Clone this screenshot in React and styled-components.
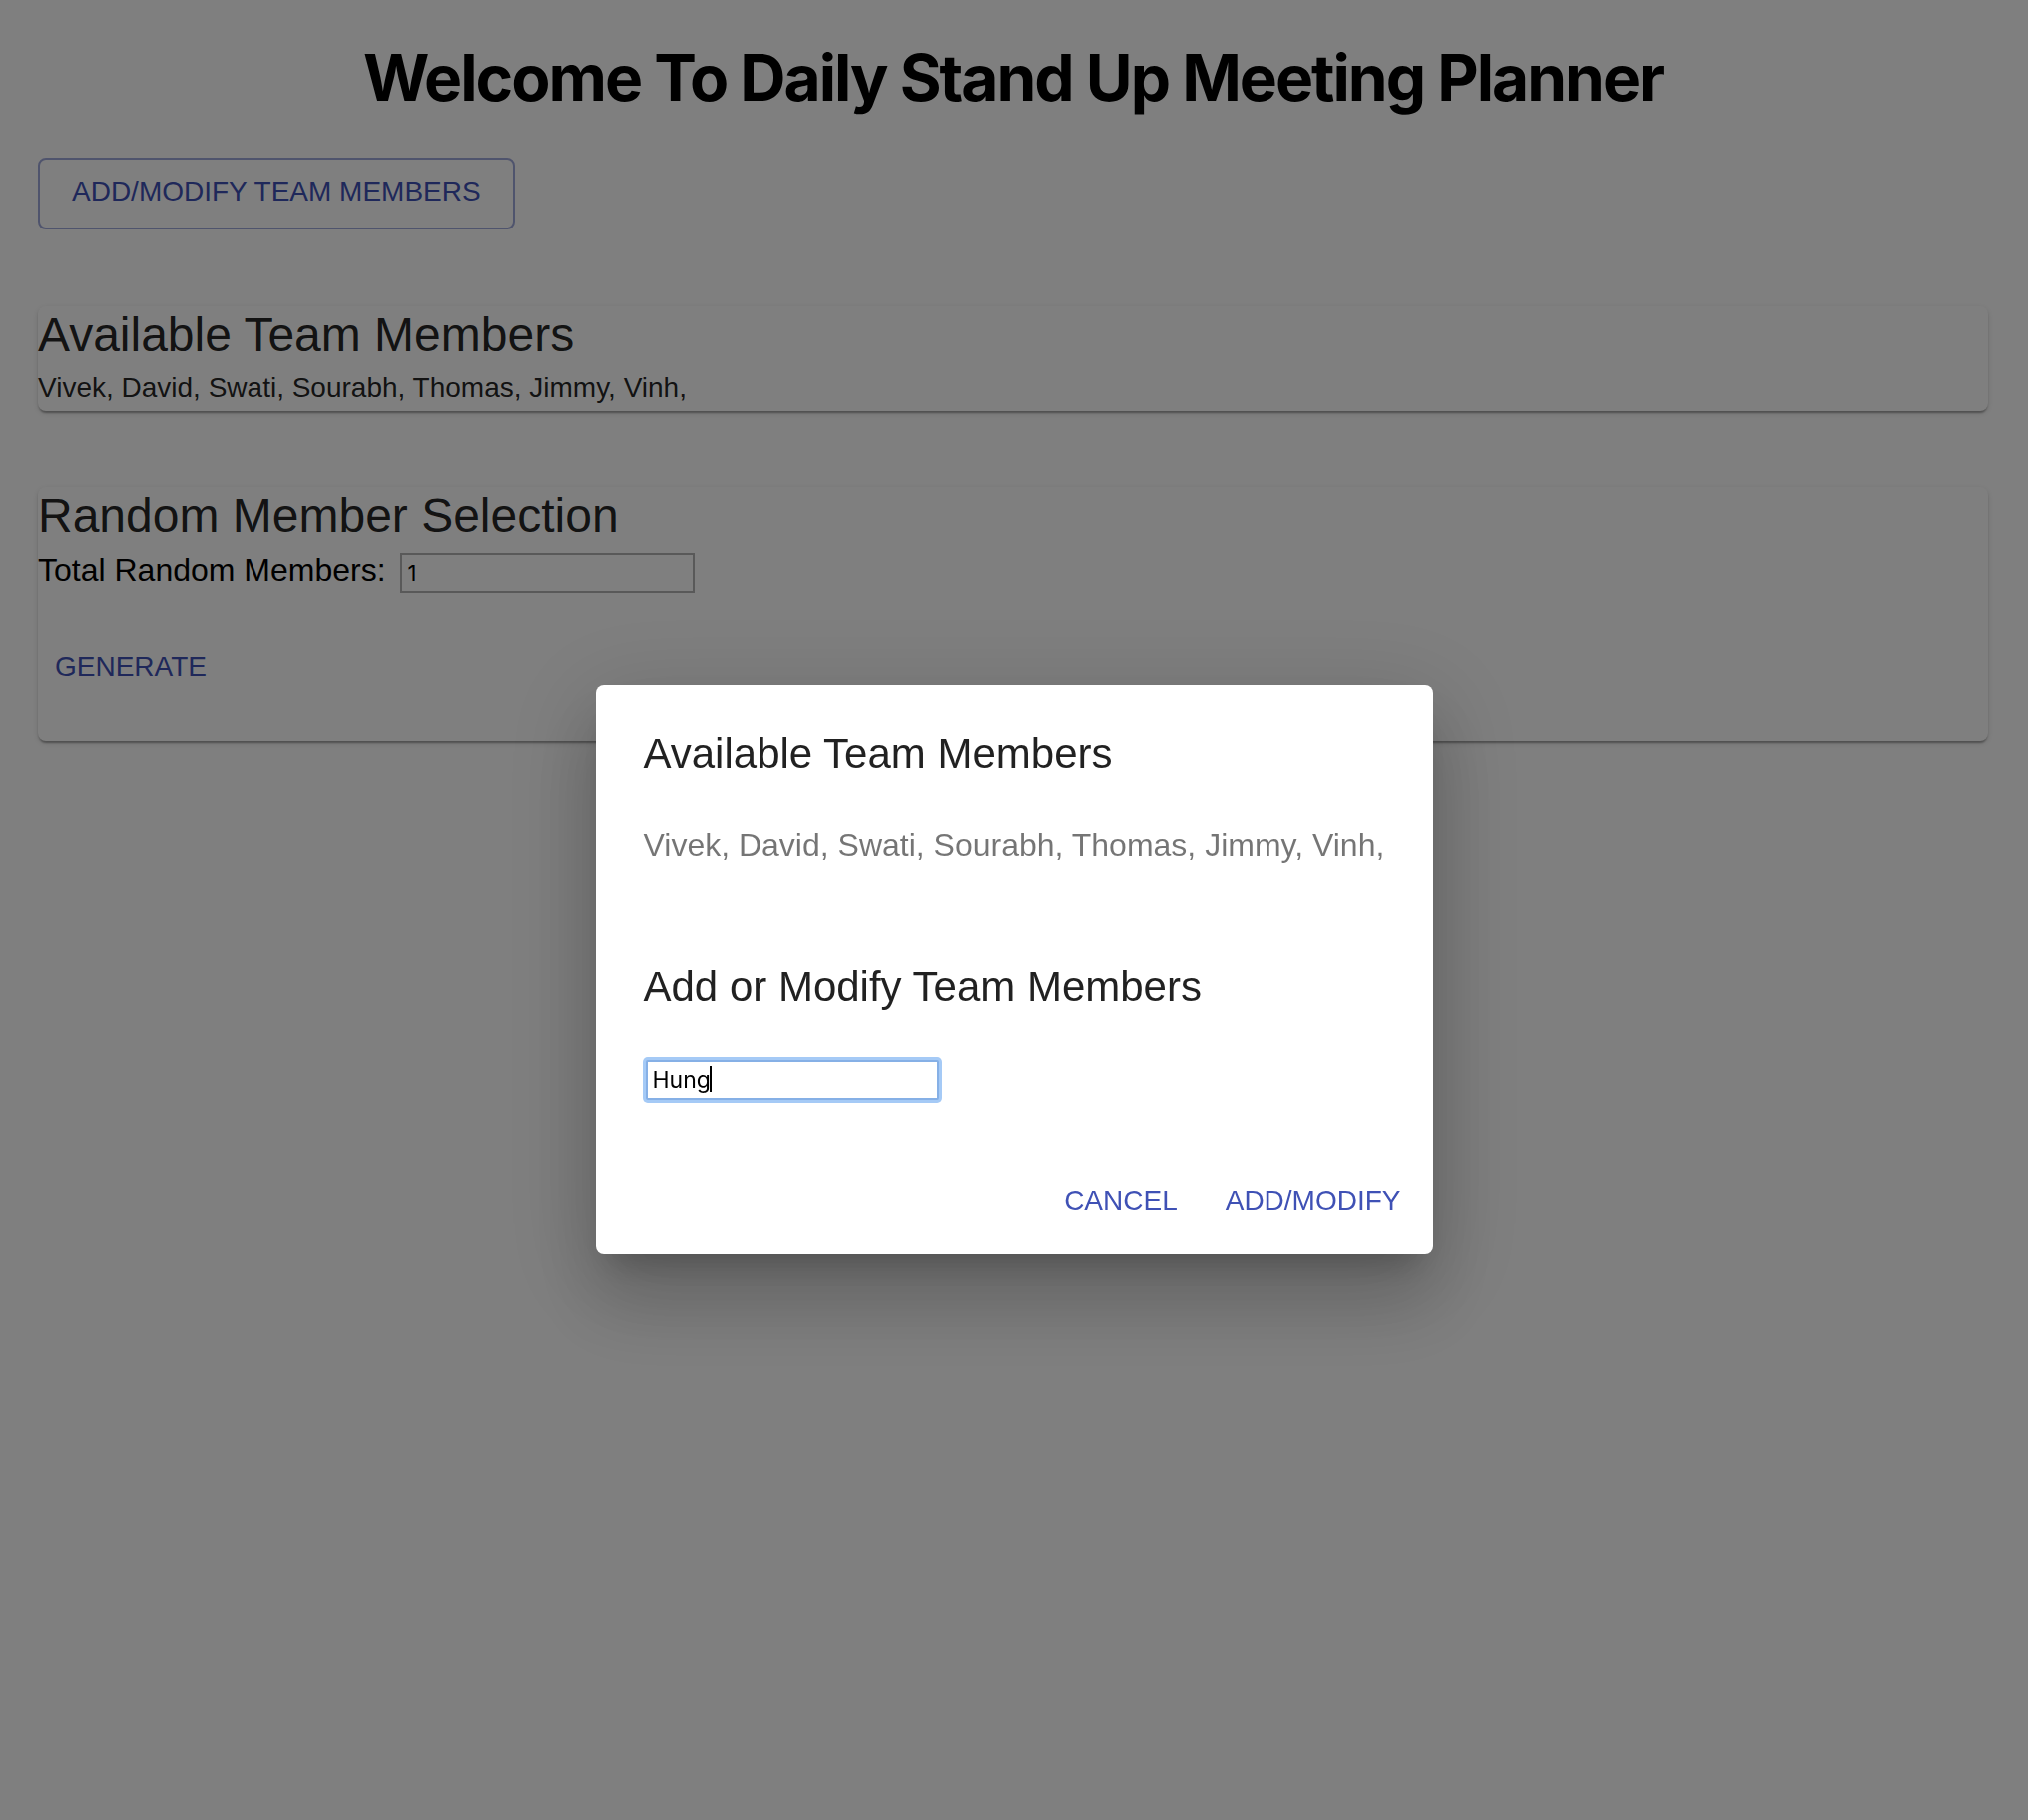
import React from 'react';
import styled, { createGlobalStyle } from 'styled-components';

const GlobalStyle = createGlobalStyle`
  html, body {
    margin: 0;
    padding: 0;
    background: #ffffff;
  }
  body {
    font-family: "Liberation Sans", Helvetica, Arial, sans-serif;
  }
  *, *::before, *::after {
    box-sizing: border-box;
  }
`;

const Page = styled.div`
  padding: 0 40px 0 38px;
  min-height: 1824px;
`;

const Title = styled.h1`
  margin: 39px 0 0;
  font-family: Inter, "Liberation Sans", sans-serif;
  font-weight: 700;
  font-size: 64px;
  line-height: 78px;
  letter-spacing: -2px;
  text-align: center;
  color: #000000;
`;

const Toolbar = styled.div`
  margin-top: 41px;
  display: flex;
`;

const OutlinedButton = styled.button`
  display: inline-flex;
  align-items: center;
  height: 72px;
  padding: 0 32px 5px;
  border: 2px solid rgba(63, 81, 181, 0.5);
  border-radius: 8px;
  background: transparent;
  color: #3f51b5;
  font-family: "Liberation Sans", Helvetica, Arial, sans-serif;
  font-size: 28px;
  line-height: 49px;
  text-transform: uppercase;
  cursor: pointer;
`;

const Card = styled.section`
  margin-top: ${(p) => p.$gap}px;
  padding-bottom: ${(p) => p.$pb}px;
  background: #ffffff;
  border-radius: 8px;
  box-shadow: 0 4px 2px -2px rgba(0, 0, 0, 0.2), 0 2px 2px 0 rgba(0, 0, 0, 0.14),
    0 2px 6px 0 rgba(0, 0, 0, 0.12);
`;

const CardHeading = styled.h2`
  margin: 0;
  font-size: 48px;
  line-height: 57px;
  font-weight: 400;
  color: rgba(0, 0, 0, 0.87);
`;

const MemberLine = styled.p`
  margin: 0;
  padding-top: 5px;
  font-size: 28px;
  line-height: 40px;
  color: rgba(0, 0, 0, 0.87);
`;

const CountRow = styled.div`
  margin-top: 2px;
  font-size: 32px;
  line-height: 48px;
  color: #000000;
`;

const CountInput = styled.input`
  margin-left: 6px;
  width: 295px;
  height: 40px;
  padding: 0 5px;
  border: 2px solid #b3b3b3;
  border-radius: 0;
  font-family: Inter, "Liberation Sans", sans-serif;
  font-size: 22px;
  color: #000000;
  background: #ffffff;
  vertical-align: baseline;
  outline: none;
`;

const TextButton = styled.button`
  display: inline-flex;
  align-items: center;
  height: 73px;
  padding: 0 16px;
  border: none;
  border-radius: 8px;
  background: transparent;
  color: #3f51b5;
  font-family: "Liberation Sans", Helvetica, Arial, sans-serif;
  font-size: 28px;
  line-height: 49px;
  text-transform: uppercase;
  cursor: pointer;
`;

const GenerateButton = styled(TextButton)`
  margin-top: 36px;
  margin-left: 1px;
`;

const Backdrop = styled.div`
  position: fixed;
  inset: 0;
  background: rgba(0, 0, 0, 0.5);
  display: flex;
  justify-content: center;
  align-items: flex-start;
  padding-top: 687px;
`;

const DialogPaper = styled.div`
  width: 839px;
  padding: 37px 0 17px;
  display: flex;
  flex-direction: column;
  background: #ffffff;
  border-radius: 8px;
  box-shadow: 0 22px 30px -14px rgba(0, 0, 0, 0.2), 0 48px 76px 6px rgba(0, 0, 0, 0.14),
    0 18px 92px 16px rgba(0, 0, 0, 0.12);
`;

const DialogHeading = styled.h2`
  margin: ${(p) => p.$mt}px 48px 0;
  font-size: 42px;
  line-height: 64px;
  font-weight: 400;
  color: rgba(0, 0, 0, 0.87);
`;

const DialogText = styled.p`
  margin: 35px 48px 0;
  font-size: 32px;
  line-height: 48px;
  color: rgba(0, 0, 0, 0.54);
  white-space: nowrap;
`;

const InputWrap = styled.div`
  position: relative;
  align-self: flex-start;
  margin: 41px 0 0 50px;
`;

const NameInput = styled.input`
  display: block;
  width: 294px;
  height: 40px;
  padding: 0 5px;
  border: 2px solid #86b0e6;
  border-radius: 2px;
  box-shadow: 0 0 0 3px #a5caf6;
  outline: none;
  font-family: Inter, "Liberation Sans", sans-serif;
  font-size: 23px;
  color: #000000;
  background: #ffffff;
  caret-color: transparent;
`;

const Caret = styled.span`
  position: absolute;
  left: 64px;
  top: 6px;
  width: 2px;
  height: 26px;
  background: #000000;
`;

const DialogActions = styled.div`
  margin-top: 65px;
  padding: 0 16px;
  display: flex;
  justify-content: flex-end;
  gap: 16px;
`;

const members = ['Vivek', 'David', 'Swati', 'Sourabh', 'Thomas', 'Jimmy', 'Vinh'];
const memberText = members.map((m) => `${m}, `).join('').trim();

export default function App() {
  return (
    <>
      <GlobalStyle />
      <Page>
        <Title>Welcome To Daily Stand Up Meeting Planner</Title>
        <Toolbar>
          <OutlinedButton type="button">Add/Modify Team Members</OutlinedButton>
        </Toolbar>

        <Card $gap={77} $pb={3}>
          <CardHeading>Available Team Members</CardHeading>
          <MemberLine>{memberText}</MemberLine>
        </Card>

        <Card $gap={76} $pb={39}>
          <CardHeading>Random Member Selection</CardHeading>
          <CountRow>
            Total Random Members:{' '}
            <CountInput type="text" defaultValue="1" readOnly />
          </CountRow>
          <GenerateButton type="button">Generate</GenerateButton>
        </Card>
      </Page>

      <Backdrop>
        <DialogPaper role="dialog">
          <DialogHeading $mt={0}>Available Team Members</DialogHeading>
          <DialogText>{memberText}</DialogText>
          <DialogHeading $mt={86}>Add or Modify Team Members</DialogHeading>
          <InputWrap>
            <NameInput type="text" defaultValue="Hung" readOnly />
            <Caret />
          </InputWrap>
          <DialogActions>
            <TextButton type="button">Cancel</TextButton>
            <TextButton type="button">Add/Modify</TextButton>
          </DialogActions>
        </DialogPaper>
      </Backdrop>
    </>
  );
}
